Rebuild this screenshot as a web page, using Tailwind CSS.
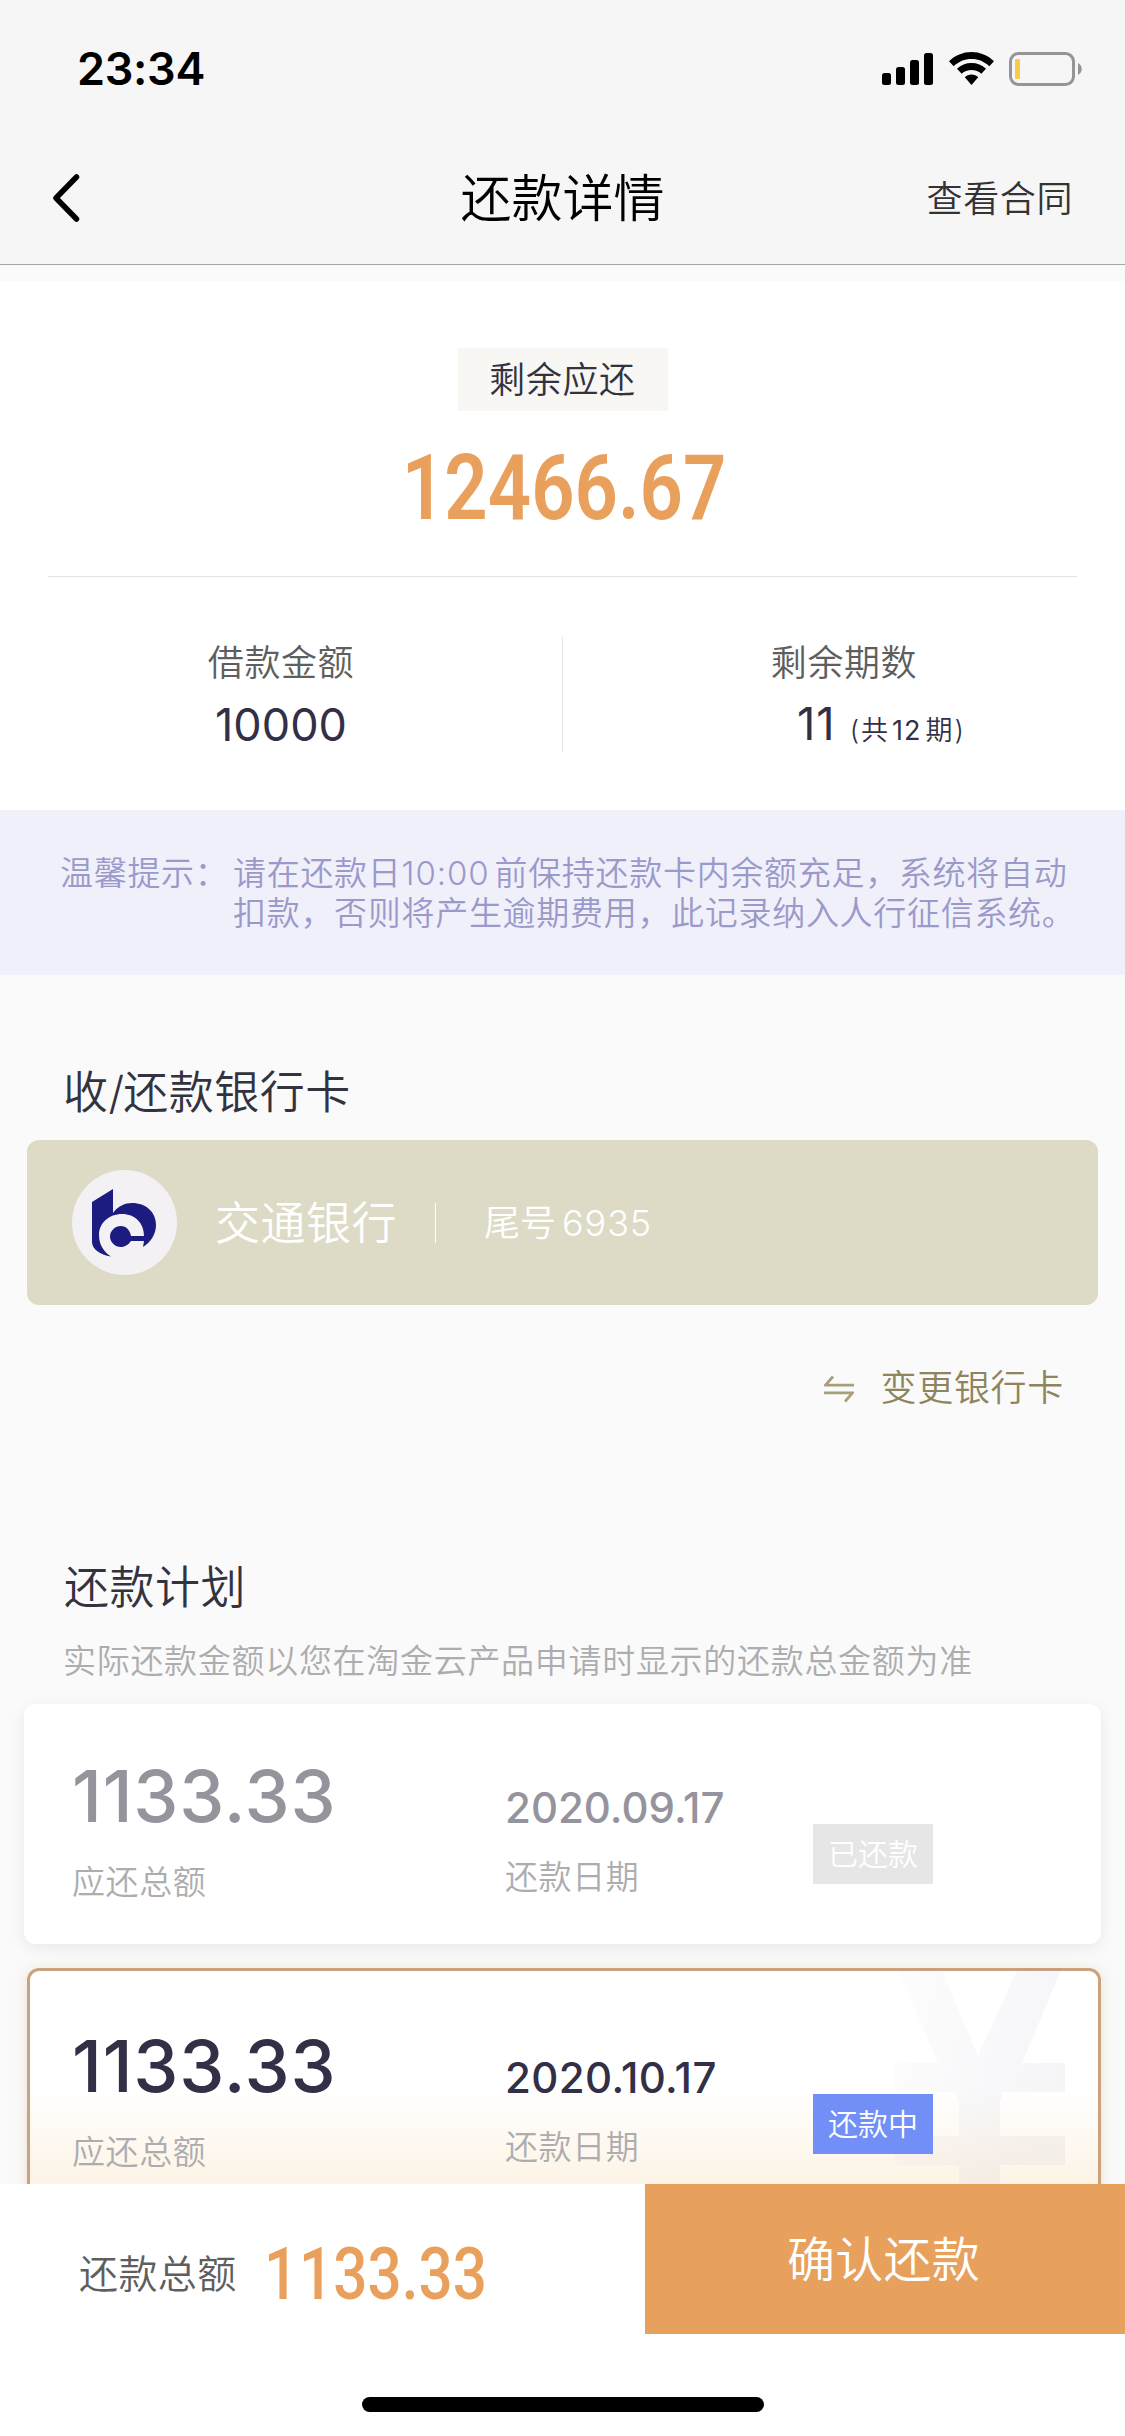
<!DOCTYPE html>
<html lang="zh-CN">
<head>
<meta charset="utf-8">
<title>还款详情</title>
<script src="https://cdn.jsdelivr.net/npm/@tailwindcss/browser@4"></script>
</head>
<body class="bg-[#fafafa]">
<div class="w-[1125px] h-[2436px] flex flex-col overflow-hidden bg-[#fafafa] font-['Inter','Noto_Sans_CJK_SC',sans-serif] whitespace-nowrap">

  <header class="h-[265px] shrink-0 bg-[#f6f6f6] border-b border-[#a6a6a8] flex flex-col">
    <div class="h-[132px] flex items-start justify-between pl-[77px] pr-[41px]">
      <span class="text-[45px] leading-[54px] mt-[42px] font-semibold text-black tracking-[-0.3px]">23:34</span>
      <svg class="w-[202px] h-[36px] mt-[51px]" viewBox="0 0 202 36">
        <rect x="0" y="22" width="9" height="12" rx="2.5"/>
        <rect x="14" y="16" width="9" height="18" rx="2.5"/>
        <rect x="28" y="9" width="9" height="25" rx="2.5"/>
        <rect x="42" y="2" width="9" height="32" rx="2.5"/>
        <path d="M89.500 1C98 1 106 4.400 112 10.200L107.300 15.200C102.500 10.600 96.300 8 89.500 8S76.500 10.600 71.700 15.200L67 10.200C73 4.400 81 1 89.500 1Z"/>
        <path d="M89.500 12C95 12 100 14 104 17.800L99.300 22.700C96.700 20.300 93.200 19 89.500 19S82.300 20.300 79.700 22.700L75 17.800C79 14 84 12 89.500 12Z"/>
        <path d="M89.500 23.500C92 23.500 94.400 24.500 96.200 26.200L89.500 34L82.800 26.200C84.600 24.500 87 23.500 89.500 23.500Z"/>
        <rect x="128.500" y="2.500" width="63" height="31" rx="8" fill="none" stroke="#959595" stroke-width="3"/>
        <rect x="133" y="8" width="5" height="20" rx="1" fill="#f7cb46"/>
        <path d="M196 12C201 14.500 201 21.500 196 24Z" fill="#959595"/>
      </svg>
    </div>
    <div class="h-[132px] flex items-center">
      <div class="flex-1 pl-[52px]">
        <svg class="w-[30px] h-[48px]" viewBox="0 0 30 48" fill="none" stroke="#000" stroke-width="5.500" stroke-linecap="round" stroke-linejoin="round"><path d="M24.500 3L4 24L24.500 45"/></svg>
      </div>
      <h1 class="pt-[2px] text-[51px] leading-[60px] font-[350] text-black">还款详情</h1>
      <div class="flex-1 flex justify-end pt-[1px] pr-[52px] text-[36px] tracking-[0.6px] font-[350] text-[#333]">查看合同</div>
    </div>
  </header>

  <section class="mt-[16px] h-[529px] shrink-0 bg-white flex flex-col items-center">
    <div class="mt-[67px] w-[210px] h-[63px] bg-[#f8f7f4] flex items-center justify-center text-[36px] leading-[50px] tracking-[0.6px] font-[350] text-[#333340]">剩余应还</div>
    <div class="mt-[33px] h-[87px] leading-[88px] text-[91px] font-semibold font-['Roboto'] text-[#e8a05c] scale-x-[0.835]"><span class="ml-[4px] mr-[-1px]">1</span>2466.67</div>
    <div class="mt-[45px] w-[1029px] h-px bg-[#e3e3e5]"></div>
    <div class="mt-[60px] w-full h-[115px] flex">
      <div class="flex-1 flex flex-col items-center border-r border-[#e6e6ea]">
        <span class="mt-[1px] text-[36px] leading-[50px] tracking-[0.6px] font-[350] text-[#5e5e5e]">借款金额</span>
        <span class="mt-[9px] text-[45px] leading-[56px] text-[#332f47]">10000</span>
      </div>
      <div class="flex-1 flex flex-col items-center">
        <span class="mt-[1px] text-[36px] leading-[50px] tracking-[0.6px] font-[350] text-[#5e5e5e]">剩余期数</span>
        <span class="mt-[8px] ml-[73px] flex items-baseline leading-[56px] text-[#332f47]"><span class="text-[45px] tracking-[1px]">11</span><span class="ml-[14px] text-[27px] font-[350]">(<span class="ml-[2px]">共</span><span class="mx-[4px] tracking-[1px] font-normal">12</span>期<span class="ml-[2px]">)</span></span></span>
      </div>
    </div>
  </section>

  <section class="h-[165px] shrink-0 bg-[#f0f0fa] flex pl-[60px] pt-[43px] text-[33px] leading-[40px] tracking-[0.7px] font-[350] text-[#9b99ca]">
    <span class="w-[173px]">温馨提示：</span>
    <p>请在还款日<span class="mr-[5px] tracking-[0.9px]">10:00</span>前保持还款卡内余额充足，系统将自动<br>扣款，否则将产生逾期费用，此记录纳入人行征信系统。</p>
  </section>

  <section class="shrink-0">
    <h2 class="mt-[88px] ml-[63px] text-[45px] leading-[60px] tracking-[0.5px] font-[350] text-[#333340]">收<span class="tracking-[-1px]">/</span>还款银行卡</h2>
    <div class="mt-[17px] ml-[27px] w-[1071px] h-[165px] rounded-[12px] bg-[#dddbc6] flex items-center pl-[45px] text-white">
      <div class="w-[105px] h-[105px] rounded-full bg-[#f3f1f3] flex items-center justify-center">
        <svg class="w-[66px] h-[68px]" viewBox="0 0 66 68" fill="#1b1b80">
          <path d="M21 0V24C26 17 33 14 40 14C54 14 64 23 64 36C64 45 59 53 51 58L52 52H39C36.500 55.500 33 58 29 58C23 58 18 53 18 47.500S23 37 29 37C34 37 38 41 39 47H52C52 34 43 25 30 25C17 25 7 34 7 46C7 56 12 63 19 67.500C8 66 0 60 0 53V13Z"/>
        </svg>
      </div>
      <span class="ml-[38px] pt-[2px] text-[45px] leading-[60px] tracking-[0.5px] font-[350]">交通银行</span>
      <span class="ml-[38px] w-px h-[40px] bg-white"></span>
      <span class="ml-[48px] text-[36px] leading-[50px] font-[350]">尾号<span class="ml-[6px] tracking-[0.9px]">6935</span></span>
    </div>
    <div class="mt-[58px] mr-[61px] h-[50px] flex items-center justify-end text-[36px] leading-[50px] tracking-[0.7px] font-[350] text-[#8f845b]">
      <svg class="w-[30px] h-[28px] mr-[26px] mt-[1px]" viewBox="0 0 30 28" fill="none" stroke="#a99e7b" stroke-width="2.700"><path d="M9 1.500L1.500 10.200H30M0 17.800H28.500L21 26.500"/></svg>
      变更银行卡
    </div>
  </section>

  <section class="mt-[145px] shrink-0">
    <h2 class="ml-[64px] text-[45px] leading-[60px] tracking-[0.5px] font-[350] text-[#333340]">还款计划</h2>
    <p class="mt-[19px] ml-[63px] text-[33px] leading-[48px] tracking-[0.7px] font-[350] text-[#adadaf]">实际还款金额以您在淘金云产品申请时显示的还款总金额为准</p>

    <article class="mt-[19px] ml-[24px] w-[1077px] h-[240px] rounded-[12px] bg-white shadow-[0_4px_16px_rgba(0,0,0,0.07)] flex items-start pl-[48px] text-[#adadaf]">
      <div class="w-[433px] pt-[48px]">
        <div class="text-[72px] leading-[88px] font-medium tracking-[0.8px] text-[#95949d]">1133.33</div>
        <div class="mt-[18px] text-[33px] leading-[48px] tracking-[0.6px] font-[350]">应还总额</div>
      </div>
      <div class="w-[308px] pt-[78px]">
        <div class="text-[42px] leading-[52px] font-medium text-[#95949d]">2020.09.17</div>
        <div class="mt-[19px] text-[33px] leading-[48px] tracking-[0.6px] font-[350]">还款日期</div>
      </div>
      <div class="mt-[120px] w-[120px] h-[60px] bg-[#e6e6e6] flex items-center justify-center text-[30px] font-[350] text-white">已还款</div>
    </article>

    <article class="relative mt-[24px] ml-[27px] w-[1074px] h-[240px] rounded-[12px] border-[3px] border-[#cba27e] bg-gradient-to-b from-white from-50% to-[#fdf1e0] shadow-[0_2px_14px_rgba(205,150,100,0.25)] flex items-start pl-[42px] text-[#adadaf]">
      <svg class="absolute left-[865px] top-[-3px] w-[171px] h-[219px]" viewBox="0 0 171 219">
        <defs><linearGradient id="yen" x1="0" y1="0" x2="1" y2="0.400"><stop offset="0" stop-color="#7878a0" stop-opacity="0.015"/><stop offset="1" stop-color="#7878a0" stop-opacity="0.070"/></linearGradient></defs>
        <path fill="url(#yen)" d="M2 0H46L83 88L123 0H167L127 95H170V124H108L105 133V168H170V197H105V219H64V197H0V168H64V133L60 124H0V95H43Z"/>
      </svg>
      <div class="relative w-[433px] pt-[51px]">
        <div class="text-[72px] leading-[88px] font-medium tracking-[0.8px] text-[#332f47]">1133.33</div>
        <div class="mt-[18px] text-[33px] leading-[48px] tracking-[0.6px] font-[350]">应还总额</div>
      </div>
      <div class="relative w-[308px] pt-[81px]">
        <div class="text-[42px] leading-[52px] font-medium tracking-[0.4px] text-[#332f47]">2020.10.17</div>
        <div class="mt-[19px] text-[33px] leading-[48px] tracking-[0.6px] font-[350]">还款日期</div>
      </div>
      <div class="relative mt-[123px] w-[120px] h-[60px] bg-[#718ff7] flex items-center justify-center text-[30px] font-[350] text-white">还款中</div>
    </article>
  </section>

  <footer class="relative mt-[-24px] h-[252px] shrink-0 bg-white flex flex-col items-center">
    <div class="w-full h-[150px] flex">
      <div class="w-[645px] flex items-center pl-[79px] pt-[30px]">
        <span class="text-[39px] leading-[56px] tracking-[0.4px] font-[350] text-[#5e5e5e]">还款总额</span>
        <span class="ml-[27px] text-[73px] leading-[80px] font-medium font-['Roboto'] text-[#e8a05c] scale-x-[0.825] origin-left"><span class="mr-[1px]">1</span>133.33</span>
      </div>
      <button class="flex-1 pt-[2px] pr-[3px] bg-[#e8a05d] text-white text-[48px] font-[350] tracking-[0.3px]">确认还款</button>
    </div>
    <div class="mt-[63px] w-[402px] h-[15px] rounded-full bg-black"></div>
  </footer>
</div>
</body>
</html>
